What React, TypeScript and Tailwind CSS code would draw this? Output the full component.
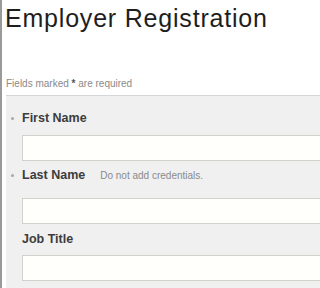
import React from "react";

function Dot() {
  return (
    <span className="-ml-[11px] w-[11px] flex items-center self-center">
      <span className="block w-[3px] h-[3px] rounded-full bg-[#a8a8a8]" />
    </span>
  );
}

export default function App() {
  const font = "font-['Liberation_Sans',Arial,Helvetica,sans-serif]";
  return (
    <div className={`w-full h-[288px] overflow-hidden bg-white border-l-2 border-[#9a9a9a] ${font}`}>
      <div className="pl-[4px] overflow-hidden">
        <h1 className="pt-[6px] -ml-[1px] text-[25px] leading-[25px] tracking-[0.8px] text-[#1e1e1e] font-normal whitespace-nowrap">
          Employer Registration
        </h1>
        <p className="mt-[48px] text-[10px] leading-[10px] text-[#8a8a8a] whitespace-nowrap">
          Fields marked <span className="text-[#555] font-bold">*</span> are required
        </p>
        <div className="mt-[6px] border-t border-[#d6d6d6] bg-[#f0f0f0] pl-[16px] pt-[15px] h-[200px] overflow-hidden">
          <div className="flex items-baseline text-[12.5px] leading-[15px] font-bold text-[#3c3c3c] whitespace-nowrap">
            <Dot />
            First Name
          </div>
          <div className="mt-[9px] h-[26px] w-[calc(100%+4px)] bg-[#fffffb] border border-[#d2d2cc]" />
          <div className="mt-[7px] flex items-baseline text-[12.5px] leading-[15px] font-bold text-[#3c3c3c] whitespace-nowrap">
            <Dot />
            Last Name
            <span className="ml-[15px] text-[10px] font-normal text-[#8a8a8a]">Do not add credentials.</span>
          </div>
          <div className="mt-[15px] h-[26px] w-[calc(100%+4px)] bg-[#fffffb] border border-[#d2d2cc]" />
          <div className="mt-[8px] text-[12.5px] leading-[15px] font-bold text-[#3c3c3c] whitespace-nowrap">
            Job Title
          </div>
          <div className="mt-[8px] h-[26px] w-[calc(100%+4px)] bg-[#fffffb] border border-[#d2d2cc]" />
        </div>
      </div>
    </div>
  );
}
